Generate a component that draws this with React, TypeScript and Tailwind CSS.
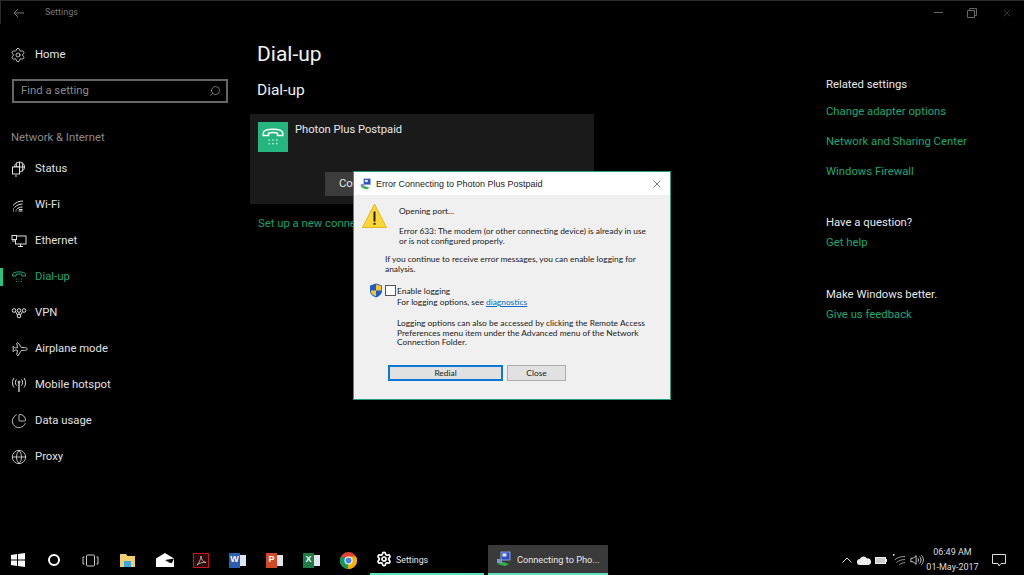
import { Globe, PieChart, Plane, Search, Settings as Gear, X } from "lucide-react";
import type { ReactNode } from "react";

const ui = "font-['Roboto',sans-serif]";
const dlg = "font-['Lato',sans-serif]";
const title = "font-['Liberation_Sans',sans-serif]";

function Ico({ children, size = 16, className = "" }: { children: ReactNode; size?: number; className?: string }) {
  return (
    <svg width={size} height={size} viewBox="0 0 16 16" fill="none" stroke="currentColor" strokeWidth="1" className={className}>
      {children}
    </svg>
  );
}

const PhoneIcon = () => (
  <>
    <path d="M1.500 7V5.500C1.500 2 14.500 2 14.500 5.500V7H11V5.500C9.500 4.800 6.500 4.800 5 5.500V7Z" />
    <path d="M5 10h1M7.500 10h1M10 10h1M5 12.500h1M7.500 12.500h1M10 12.500h1" strokeWidth="0.8" />
  </>
);

const NAV: { label: string; icon: ReactNode; active?: boolean }[] = [
  {
    label: "Status",
    icon: (
      <Ico>
        <circle cx="8.500" cy="6" r="5" />
        <path d="M3.500 6h10M8.500 1v10M6 1.500C5 4 5 8 6 10.500M11 1.500c1 2.500 1 6.500 0 9" />
        <rect x="1.500" y="6" width="7" height="7" fill="#000" />
        <path d="M4 15h2" />
      </Ico>
    ),
  },
  {
    label: "Wi-Fi",
    icon: (
      <Ico>
        <path d="M2 8.500C4.500 5.500 8 4 12 4M3.500 10.500C5.500 8.500 8 7 11.500 7M5.500 12.500C7 11 9 10 11.500 10" />
        <path d="M2 12h1M2 14h1M4.500 14h1M7.500 14h4M8 12.500h3.500" />
      </Ico>
    ),
  },
  {
    label: "Ethernet",
    icon: (
      <Ico>
        <rect x="4.500" y="3" width="10.500" height="8" />
        <path d="M9.500 11v2.500M7 13.500h5" />
        <rect x="1" y="2.500" width="4.500" height="4" fill="#000" />
        <path d="M2 6.500V9M4 6.500V9" />
      </Ico>
    ),
  },
  { label: "Dial-up", active: true, icon: <Ico><PhoneIcon /></Ico> },
  {
    label: "VPN",
    icon: (
      <Ico>
        <circle cx="3" cy="5.500" r="1.800" />
        <circle cx="13" cy="5.500" r="1.800" />
        <circle cx="8" cy="5.500" r="1.800" />
        <circle cx="8" cy="11" r="1.800" />
        <path d="M8 7.300v1.900M4.500 6.500l2 3.500M11.500 6.500l-2 3.500" />
      </Ico>
    ),
  },
  { label: "Airplane mode", icon: <Plane size={16} strokeWidth={1.25} className="rotate-45" /> },
  {
    label: "Mobile hotspot",
    icon: (
      <Ico>
        <path d="M8 5.500V15" strokeWidth="1.300" />
        <circle cx="8" cy="5" r="1" />
        <path d="M5.500 2.500C4 4 4 7 5.500 8.500M10.500 2.500C12 4 12 7 10.500 8.500M3 1C1 3.500 1 8 3 10.500M13 1c2 2.500 2 7 0 9.500" />
      </Ico>
    ),
  },
  { label: "Data usage", icon: <PieChart size={16} strokeWidth={1.25} /> },
  { label: "Proxy", icon: <Globe size={16} strokeWidth={1.25} /> },
];

function Sidebar() {
  return (
    <div className="w-[250px] shrink-0 pt-[13px]">
      <div className="flex h-[36px] items-center gap-[9px] pl-[10px] text-[11.3px] text-[#e6e6e6]">
        <Gear size={16} strokeWidth={1.2} className="shrink-0" />
        <span>Home</span>
      </div>
      <div className="mx-[12px] mt-[6px] flex h-[24px] w-[216px] items-center justify-between border-2 border-[#666] pl-[7px] pr-[5px] text-[11.3px] text-[#8c8c8c]">
        <span>Find a setting</span>
        <Search size={12} strokeWidth={1.3} className="-scale-x-100 text-[#aaa]" />
      </div>
      <div className="mt-[25px] pl-[11px] text-[11.3px] leading-[20px] text-[#8a8a8a]">Network &amp; Internet</div>
      <div className="mt-[3px]">
        {NAV.map((n) => (
          <div
            key={n.label}
            className={`flex h-[36px] items-center gap-[8px] pl-[10px] text-[11.3px] ${n.active ? "text-[#1fa874]" : "text-[#e0e0e0]"}`}
          >
            {n.active && <span className="absolute left-0 h-[18px] w-[3px] bg-[#27c281]" />}
            <span className="flex w-[17px] shrink-0 justify-center">{n.icon}</span>
            <span>{n.label}</span>
          </div>
        ))}
      </div>
    </div>
  );
}

function Center() {
  return (
    <div className="w-[576px] shrink-0 pt-[15px]">
      <div className="pl-[7px] text-[21px] leading-[30px] text-[#f0f0f0]">Dial-up</div>
      <div className="mt-[10px] pl-[7px] text-[15.5px] leading-[22px] text-[#f0f0f0]">Dial-up</div>
      <div className="mt-[13px] flex h-[90px] w-[344px] flex-col bg-[#1a1a1a] p-[8px]">
        <div className="flex gap-[7px]">
          <div className="flex h-[30px] w-[30px] items-center justify-center bg-[#25b67f] text-white">
            <Ico size={24}><PhoneIcon /></Ico>
          </div>
          <div className="text-[11.2px] leading-[15px] text-[#e8e8e8]">Photon Plus Postpaid</div>
        </div>
        <div className="ml-[67px] mt-[20px] flex h-[24px] w-[110px] items-center bg-[#3c3c3c] pl-[14px] text-[11.3px] text-[#e8e8e8]">
          Co
        </div>
      </div>
      <div className="mt-[11px] pl-[8px] text-[11.3px] leading-[18px] text-[#1aa06f]">Set up a new connection</div>
    </div>
  );
}

const LINK = "text-[11.3px] leading-[18px] text-[#1aa874]";
const HEAD = "text-[11.3px] leading-[18px] text-[#e8e8e8]";

function Related() {
  return (
    <div className="flex-1 pt-[52px]">
      <div className={HEAD}>Related settings</div>
      <div className={`${LINK} mt-[9px]`}>Change adapter options</div>
      <div className={`${LINK} mt-[12px]`}>Network and Sharing Center</div>
      <div className={`${LINK} mt-[12px]`}>Windows Firewall</div>
      <div className={`${HEAD} mt-[33px]`}>Have a question?</div>
      <div className={`${LINK} mt-[2px]`}>Get help</div>
      <div className={`${HEAD} mt-[34px]`}>Make Windows better.</div>
      <div className={`${LINK} mt-[2px]`}>Give us feedback</div>
    </div>
  );
}

function NetIcon({ size = 16 }: { size?: number }) {
  return (
    <svg width={size} height={size} viewBox="0 0 16 16">
      <rect x="5" y="1" width="9" height="8" fill="#2b4fc4" stroke="#9db4e8" strokeWidth="0.8" />
      <rect x="6.500" y="2.500" width="4" height="3" fill="#dfe9ff" />
      <path d="M1 13l6-2 6 2-4 2z" fill="#2fb34a" />
      <rect x="1" y="8" width="5" height="4" fill="#7f93c9" />
    </svg>
  );
}

function Dialog() {
  return (
    <div className={`${dlg} absolute left-[353px] top-[171px] h-[229px] w-[318px] border border-[#2a9d7c] bg-[#f0f0f0] text-[8.4px] leading-[10px] text-[#1a1a1a]`}>
      <div className="flex h-[23px] items-center bg-white pl-[6px] pr-[7px]">
        <NetIcon size={12} />
        <span className={`${title} ml-[4px] text-[9px] text-[#222]`}>Error Connecting to Photon Plus Postpaid</span>
        <X size={12} strokeWidth={1.2} className="ml-auto text-[#222]" />
      </div>
      <div className="flex pl-[8px] pt-[8px]">
        <svg width="25" height="25" viewBox="0 0 25 25" className="shrink-0">
          <path d="M12.500 1 24.500 24.500H.5Z" fill="#fdd835" stroke="#d9a400" strokeWidth="0.7" />
          <rect x="11.500" y="8.500" width="2" height="10" fill="#222" />
          <rect x="11.500" y="19.800" width="2" height="2" fill="#222" />
        </svg>
        <div className="ml-[12px] pt-[3px]">
          <div>Opening port...</div>
          <div className="mt-[10px] w-[250px]">
            Error 633: The modem (or other connecting device) is already in use or is not configured properly.
          </div>
        </div>
      </div>
      <div className="ml-[31px] mt-[8px] w-[262px]">
        If you continue to receive error messages, you can enable logging for analysis.
      </div>
      <div className="ml-[15px] mt-[9px] flex items-center">
        <svg width="14" height="15" viewBox="0 0 14 15">
          <path d="M7 .5 13 2.500V8C13 11 10 13.500 7 14.500 4 13.500 1 11 1 8V2.500Z" fill="#1d5fc4" />
          <path d="M7 1.500V7.500H1.800V8C2 9 2.500 10 3 11L7 13.500V7.500H12.300V3L7 1.500Z" fill="#f6c531" />
        </svg>
        <span className="ml-[2px] h-[11px] w-[11px] border border-[#555] bg-white" />
        <span className="ml-[1px]">Enable logging</span>
      </div>
      <div className="ml-[43px] -mt-[1px]">
        For logging options, see <span className="text-[#0a6cc4] underline">diagnostics</span>
      </div>
      <div className="ml-[43px] mt-[12px] w-[256px] leading-[9.7px]">
        Logging options can also be accessed by clicking the Remote Access Preferences menu item under the Advanced menu of the Network Connection Folder.
      </div>
      <div className="ml-[34px] mt-[17px] flex gap-[4px]">
        <div className="flex h-[16px] w-[115px] items-center justify-center border-2 border-[#0a78d4] bg-[#e1e1e1]">Redial</div>
        <div className="flex h-[16px] w-[59px] items-center justify-center border border-[#adadad] bg-[#e1e1e1]">Close</div>
      </div>
    </div>
  );
}

function TaskSlot({ children, w = 36 }: { children: ReactNode; w?: number }) {
  return (
    <div className="flex shrink-0 items-center justify-center" style={{ width: w }}>
      {children}
    </div>
  );
}

function OfficeIcon({ fill, letter }: { fill: string; letter: string }) {
  return (
    <div className="relative h-[15px] w-[17px]">
      <div className="absolute right-0 top-[2px] h-[11px] w-[10px] bg-[#dfe6ee]" />
      <div className={`${title} absolute left-0 top-0 flex h-[15px] w-[11px] items-center justify-center text-[9px] font-bold text-white`} style={{ background: fill }}>
        {letter}
      </div>
    </div>
  );
}

function Taskbar() {
  return (
    <div className="flex h-[30px] shrink-0 items-stretch text-[#e8e8e8]">
      <TaskSlot w={36}>
        <svg width="14" height="14" viewBox="0 0 14 14" fill="#fff">
          <path d="M0 2 6 1.100V6.600H0ZM7 1 14 0V6.600H7ZM0 7.400H6V12.900L0 12ZM7 7.400H14V14L7 13Z" />
        </svg>
      </TaskSlot>
      <TaskSlot>
        <span className="h-[12px] w-[12px] rounded-full border-2 border-white" />
      </TaskSlot>
      <TaskSlot>
        <svg width="17" height="13" viewBox="0 0 17 13" fill="none" stroke="#ccc">
          <rect x="4.500" y="1" width="8" height="11" rx="1" />
          <path d="M2.500 3H1v7h1.500M14.500 3H16v7h-1.500" />
        </svg>
      </TaskSlot>
      <TaskSlot w={38}>
        <svg width="17" height="15" viewBox="0 0 17 15">
          <path d="M1 1h6l1.500 2H16v11H1Z" fill="#f3cf6b" />
          <rect x="5" y="8" width="7" height="6" fill="#38a9e0" />
        </svg>
      </TaskSlot>
      <TaskSlot w={37}>
        <svg width="18" height="14" viewBox="0 0 18 14">
          <path d="M0 5.500 9 0l9 5.500V14H0Z" fill="#fff" />
          <path d="M0 5.500 16 10.500 9 7 18 5.500 16 10 8 8Z" fill="#000" />
        </svg>
      </TaskSlot>
      <TaskSlot w={36}>
        <div className="flex h-[15px] w-[16px] items-center justify-center border border-[#c8141c] bg-[#2a0a0a]">
          <svg width="11" height="11" viewBox="0 0 11 11" fill="none" stroke="#d8c8c8" strokeWidth="0.8">
            <path d="M1 10C3 8 5 4 5 1c0 3 2 6 5 6.500C7 7 3.500 8 1 10Z" />
          </svg>
        </div>
      </TaskSlot>
      <TaskSlot w={37}>
        <OfficeIcon fill="#2b5fb3" letter="W" />
      </TaskSlot>
      <TaskSlot w={37}>
        <OfficeIcon fill="#d2492a" letter="P" />
      </TaskSlot>
      <TaskSlot w={37}>
        <OfficeIcon fill="#1f7a45" letter="X" />
      </TaskSlot>
      <TaskSlot w={36}>
        <svg width="17" height="17" viewBox="0 0 17 17">
          <circle cx="8.500" cy="8.500" r="8.500" fill="#db4437" />
          <path d="M8.500 8.500 1.100 4.200A8.500 8.500 0 0 0 8 17Z" fill="#0f9d58" />
          <path d="M8.500 8.500 8 17A8.500 8.500 0 0 0 16 4.500H8.500Z" fill="#f4b400" />
          <circle cx="8.500" cy="8.500" r="4" fill="#fff" />
          <circle cx="8.500" cy="8.500" r="3" fill="#4285f4" />
        </svg>
      </TaskSlot>
      <div className="ml-[4px] flex w-[114px] items-center border-b-2 border-[#5fe0c0] pl-[6px] text-[8.8px]">
        <Gear size={16} strokeWidth={2.6} className="text-white" />
        <span className="ml-[4px] pt-[3px]">Settings</span>
      </div>
      <div className="ml-[4px] flex w-[120px] items-center border-b-2 border-[#5fe0c0] bg-[#3a3a3a] pl-[8px] text-[9.2px]">
        <NetIcon />
        <span className="ml-[5px] whitespace-nowrap pt-[2px]">Connecting to Pho...</span>
      </div>
      <div className="ml-auto flex items-center pr-[18px]">
        <svg width="10" height="6" viewBox="0 0 10 6" fill="none" stroke="#ddd">
          <path d="M.5 5.500 5 1l4.500 4.500" />
        </svg>
        <svg width="14" height="9" viewBox="0 0 14 9" fill="#eee" className="ml-[5px]">
          <path d="M3 9A3 3 0 0 1 2.800 3 4 4 0 0 1 10 2.500 3 3 0 0 1 11.500 9Z" />
        </svg>
        <svg width="12" height="7" viewBox="0 0 12 7" className="ml-[4px]">
          <rect x=".5" y=".5" width="10" height="6" fill="#ccc" stroke="#eee" />
          <rect x="11" y="2" width="1" height="3" fill="#eee" />
        </svg>
        <Ico size={14} className="ml-[5px] text-[#aaa]">
          <path d="M3 8C6 5 10 4 15 4M5 11C8 8.500 11 7.500 15 7.500M8 14C10 12 12 11 15 11" />
          <circle cx="2" cy="2" r="1" fill="#fff" stroke="none" />
        </Ico>
        <Ico size={14} className="ml-[4px] text-[#ddd]">
          <path d="M1 6v4h2.500L7 13V3L3.500 6Z" />
          <path d="M9 6c1 1 1 3 0 4M11 4c2 2 2 6 0 8M13 2.500c3 3 3 8 0 11" />
        </Ico>
        <div className="w-[57px] whitespace-nowrap text-center text-[9px] leading-[15px] text-[#ddd]">
          <div>06:49 AM</div>
          <div>01-May-2017</div>
        </div>
        <svg width="14" height="13" viewBox="0 0 14 13" fill="none" stroke="#ddd" className="ml-[11px]">
          <path d="M.5.500h13v9H9L7 12l-1-2.500H.5Z" />
        </svg>
      </div>
    </div>
  );
}

export default function App() {
  return (
    <div className={`${ui} relative flex h-[575px] w-[1024px] flex-col overflow-hidden bg-black`}>
      <div className="flex h-[24px] shrink-0 items-center border-l border-t border-[#2b2b2b] text-[#777]">
        <svg width="12" height="10" viewBox="0 0 12 10" fill="none" stroke="currentColor" className="ml-[12px]">
          <path d="M11 5H1M5 1 1 5l4 4" />
        </svg>
        <span className="ml-[20px] text-[9px]">Settings</span>
        <div className="ml-auto flex items-center gap-[24px] pr-[11px]">
          <span className="h-px w-[9px] bg-[#666]" />
          <svg width="10" height="10" viewBox="0 0 10 10" fill="none" stroke="#666">
            <path d="M2.500 2.500V.5h7v7h-2M.5 2.500h7v7h-7Z" />
          </svg>
          <X size={12} strokeWidth={1} className="text-[#666]" />
        </div>
      </div>
      <div className="relative flex min-h-0 flex-1">
        <Sidebar />
        <Center />
        <Related />
      </div>
      <Taskbar />
      <Dialog />
    </div>
  );
}
